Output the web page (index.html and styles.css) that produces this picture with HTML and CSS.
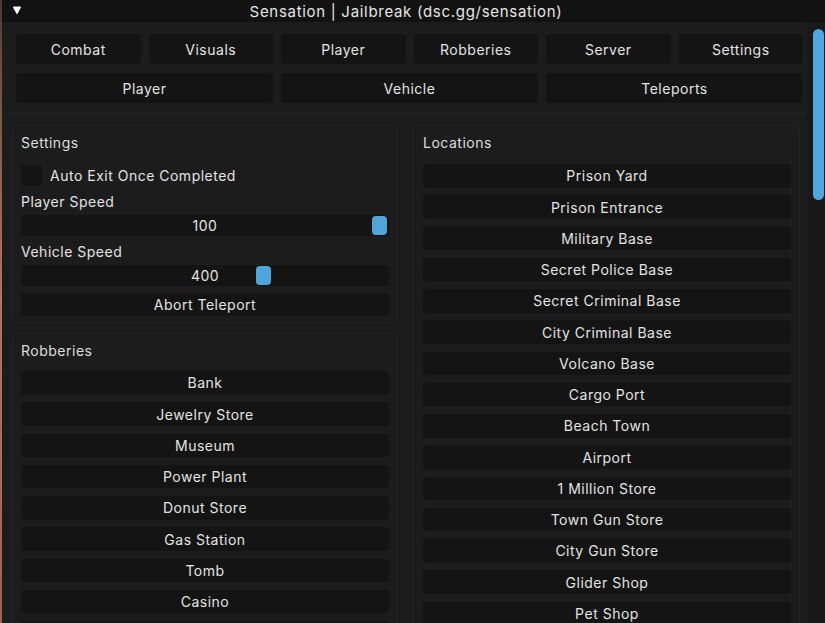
FILE: index.html
```html
<!DOCTYPE html>
<html>
<head>
<meta charset="utf-8">
<link rel="stylesheet" href="styles.css">
</head>
<body>
<div class="window">
  <div class="titlebar">
    <svg class="collapse" width="10" height="9" viewBox="0 0 10 9"><path d="M1 1.5 Q1 0.5 2 0.5 L8 0.5 Q9 0.5 9 1.5 L5 8.5 Z" fill="#fff"/></svg>
    <span class="title">Sensation | Jailbreak (dsc.gg/sensation)</span>
  </div>
  <div class="body">
    <div class="main">
      <div class="tabs">
        <div class="tabrow six">
          <div class="tab">Combat</div>
          <div class="tab">Visuals</div>
          <div class="tab">Player</div>
          <div class="tab">Robberies</div>
          <div class="tab">Server</div>
          <div class="tab">Settings</div>
        </div>
        <div class="tabrow three">
          <div class="tab">Player</div>
          <div class="tab">Vehicle</div>
          <div class="tab">Teleports</div>
        </div>
      </div>
      <div class="content">
        <div class="col">
          <div class="panel settings">
            <div class="ptitle">Settings</div>
            <div class="check-row">
              <div class="checkbox"></div>
              <span>Auto Exit Once Completed</span>
            </div>
            <div class="label">Player Speed</div>
            <div class="slider"><span>100</span><div class="knob" style="left:351px"></div></div>
            <div class="label">Vehicle Speed</div>
            <div class="slider"><span>400</span><div class="knob" style="left:235px"></div></div>
            <div class="btn abort">Abort Teleport</div>
          </div>
          <div class="panel list robberies">
            <div class="ptitle">Robberies</div>
            <div class="btn">Bank</div>
            <div class="btn">Jewelry Store</div>
            <div class="btn">Museum</div>
            <div class="btn">Power Plant</div>
            <div class="btn">Donut Store</div>
            <div class="btn">Gas Station</div>
            <div class="btn">Tomb</div>
            <div class="btn">Casino</div>
            <div class="btn">Mansion</div>
            <div class="btn">Cargo Ship</div>
          </div>
        </div>
        <div class="col">
          <div class="panel list">
            <div class="ptitle">Locations</div>
            <div class="btn">Prison Yard</div>
            <div class="btn">Prison Entrance</div>
            <div class="btn">Military Base</div>
            <div class="btn">Secret Police Base</div>
            <div class="btn">Secret Criminal Base</div>
            <div class="btn">City Criminal Base</div>
            <div class="btn">Volcano Base</div>
            <div class="btn">Cargo Port</div>
            <div class="btn">Beach Town</div>
            <div class="btn">Airport</div>
            <div class="btn">1 Million Store</div>
            <div class="btn">Town Gun Store</div>
            <div class="btn">City Gun Store</div>
            <div class="btn">Glider Shop</div>
            <div class="btn">Pet Shop</div>
            <div class="btn">Gas Station</div>
          </div>
        </div>
      </div>
    </div>
    <div class="track"><div class="thumb"></div></div>
  </div>
</div>
</body>
</html>
```

FILE: styles.css
```css
* { box-sizing: border-box; }
html, body {
  margin: 0;
  width: 825px;
  height: 623px;
  overflow: hidden;
}
body {
  background: linear-gradient(#4a3830 0px, #6e4c40 60px, #b47560 300px, #9a6450 623px);
  font-family: Inter, "Noto Sans", sans-serif;
  font-size: 14px;
  letter-spacing: 0.5px;
  color: #e3e3e3;
}
.window {
  margin-left: 2px;
  width: 823px;
  height: 623px;
  background: #1c1c1c;
  display: flex;
  flex-direction: column;
}
.titlebar {
  height: 22px;
  flex: none;
  background: #121212;
  display: flex;
  align-items: center;
  justify-content: center;
  padding-right: 15px;
  position: relative;
}
.collapse {
  position: absolute;
  left: 10px;
  top: 6px;
}
.title {
  font-size: 15px;
  letter-spacing: 0.7px;
  color: #e6e6e6;
}
.body {
  flex: 1;
  display: flex;
  min-height: 0;
}
.main {
  width: 805px;
  flex: none;
  display: flex;
  flex-direction: column;
  min-height: 0;
  overflow: hidden;
}
.tabs {
  padding: 12px 4px 10px 14px;
  border-bottom: 1px solid #242424;
  display: flex;
  flex-direction: column;
  gap: 9px;
}
.tabrow {
  display: grid;
  gap: 8px;
}
.tabrow.six { grid-template-columns: repeat(6, 1fr); }
.tabrow.three { grid-template-columns: repeat(3, 1fr); }
.tab {
  height: 30px;
  background: #141414;
  border-radius: 4px;
  display: flex;
  align-items: center;
  justify-content: center;
}
.content {
  padding: 11px 7px 0 10px;
  display: grid;
  grid-template-columns: 386px 387px;
  gap: 15px;
  min-height: 0;
  flex: 1;
  overflow: hidden;
}
.col {
  display: flex;
  flex-direction: column;
  gap: 10px;
}
.panel {
  border: 1px solid #252525;
  border-radius: 6px;
  background: #1c1c1c;
  padding: 7px 8px 6px 8px;
  display: flex;
  flex-direction: column;
}
.col + .col .panel { padding-left: 9px; }
.ptitle {
  height: 20px;
  line-height: 20px;
  color: #dedede;
  margin-bottom: 11px;
}
.settings .ptitle { margin-bottom: 12px; }
.robberies .ptitle { margin-bottom: 10px; }
.check-row {
  display: flex;
  align-items: center;
  gap: 8px;
  height: 21px;
}
.checkbox {
  width: 21px;
  height: 21px;
  border-radius: 3px;
  background: #141414;
}
.label {
  height: 20px;
  line-height: 20px;
  margin-top: 5px;
  margin-bottom: 4px;
  padding-top: 1px;
}
.slider {
  position: relative;
  height: 21px;
  background: #141414;
  border-radius: 4px;
  display: flex;
  align-items: center;
  justify-content: center;
}
.knob {
  position: absolute;
  top: 1px;
  width: 15px;
  height: 19px;
  border-radius: 4px;
  background: #4fa5da;
}
.btn {
  height: 23.5px;
  background: #141414;
  border-radius: 4px;
  display: flex;
  align-items: center;
  justify-content: center;
  flex: none;
}
.list .btn + .btn { margin-top: 7.75px; }
.abort { margin-top: 7px; height: 23px; }
.track {
  flex: 1;
  background: #191919;
  padding: 7px 1px 0 6px;
}
.thumb {
  width: 11px;
  height: 171px;
  border-radius: 6px;
  background: #4fa7dc;
}
```
